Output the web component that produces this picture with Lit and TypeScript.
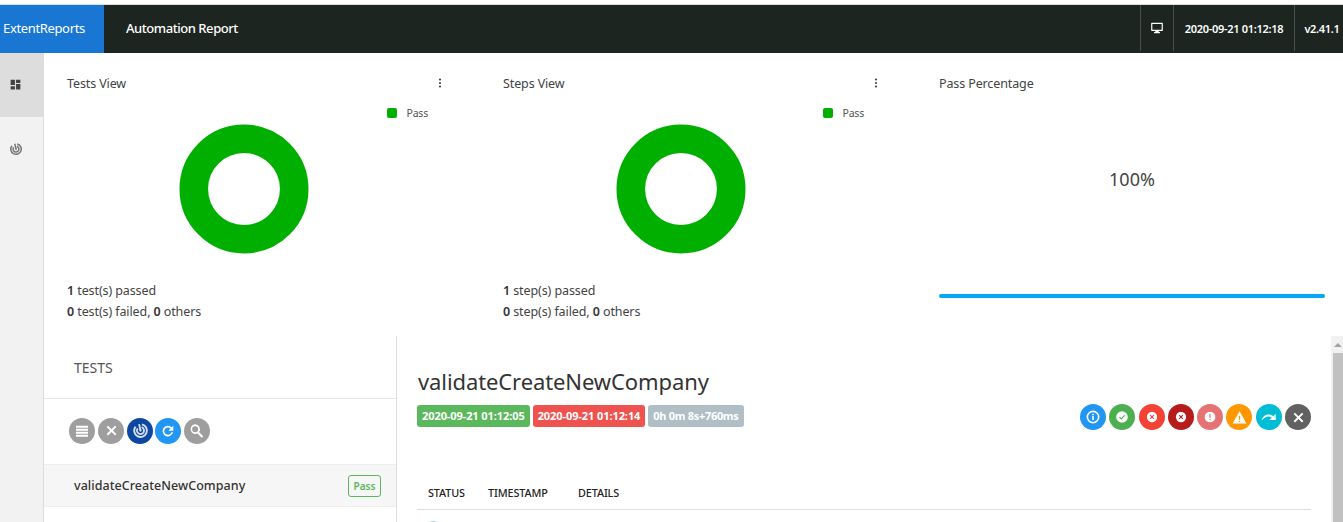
import { LitElement, html, css, svg } from 'lit';
import { customElement } from 'lit/decorators.js';

const I = {
  dash: svg`<path d="M3 3h8v10H3zM13 3h8v6h-8zM13 11h8v10h-8zM3 15h8v6H3z"/>`,
  dots: svg`<circle cx="12" cy="5" r="2.2"/><circle cx="12" cy="12" r="2.2"/><circle cx="12" cy="19" r="2.2"/>`,
  monitor: svg`<path d="M3 3h18a1 1 0 0 1 1 1v12a1 1 0 0 1-1 1h-6v2h2v2H7v-2h2v-2H3a1 1 0 0 1-1-1V4a1 1 0 0 1 1-1zm1 2v10h16V5z"/>`,
  close: svg`<path d="M6.400 4.200 12 9.800l5.600-5.600 2.200 2.200-5.600 5.600 5.600 5.600-2.200 2.200-5.600-5.600-5.600 5.600-2.200-2.200 5.600-5.600-5.600-5.600z"/>`,
  list: svg`<path d="M3 4h18v3H3zM3 8.500h18v3H3zM3 13h18v3H3zM3 17.500h18v3H3z"/>`,
  refresh: svg`<path d="M17.600 6.400A8 8 0 1 0 19.700 14h-2.600a5.500 5.500 0 1 1-1.300-5.800L12.500 11.500H20V4z"/>`,
  search: svg`<path d="M9.500 3a6.500 6.500 0 0 1 5.200 10.400l5.600 5.600-2 2-5.600-5.600A6.500 6.500 0 1 1 9.500 3zm0 2.500a4 4 0 1 0 0 8 4 4 0 0 0 0-8z"/>`,
  forward: svg`<path d="M2 17c1-5 4.500-8.500 9.500-8.500 2.600 0 4.700 1 6.300 2.500L21 7.500V16h-8.500l3.200-3.200c-1.200-1-2.600-1.500-4.200-1.500C8 11.300 4.500 13.500 2 17z"/>`,
};

function icon(p: unknown, size = 14, color = 'currentColor') {
  return html`<svg class="ic" viewBox="0 0 24 24" width=${size} height=${size} fill=${color}>${p}</svg>`;
}

// concentric rings used by the "tests" nav entry and the filter button
function target(size: number, color: string) {
  return html`<svg class="ic" viewBox="0 0 24 24" width=${size} height=${size} fill="none" stroke=${color} stroke-width="2.600">
    <path d="M14 3.300A9 9 0 1 1 5 6.500"/>
    <path d="M13.500 7.300A5 5 0 1 1 8 9"/>
    <circle cx="12" cy="12" r="1.600" fill=${color} stroke="none"/>
    <path d="M12 12 10 3"/>
  </svg>`;
}

function donut() {
  return html`<svg class="donut" viewBox="0 0 130 130" width="130" height="130">
    <circle cx="65" cy="65" r="50.200" fill="none" stroke="#00af00" stroke-width="28.600"/>
  </svg>`;
}

const statusIcons = [
  { bg: '#2196f3', size: 16, g: svg`<circle cx="12" cy="12" r="8.500" fill="none" stroke="#fff" stroke-width="2.400"/><path d="M10.800 10.500h2.400v6h-2.400zM10.800 7h2.400v2.200h-2.400z" fill="#fff"/>` },
  { bg: '#4caf50', size: 14, g: svg`<circle cx="12" cy="12" r="10" fill="#fff"/><path d="m7.500 12.200 3.200 3.200 5.800-6" fill="none" stroke="#4caf50" stroke-width="1.800"/>` },
  { bg: '#f44336', size: 14, g: svg`<circle cx="12" cy="12" r="8.800" fill="#fff"/><path d="m8.800 8.800 6.400 6.400m0-6.400-6.400 6.400" fill="none" stroke="#f44336" stroke-width="1.800"/>` },
  { bg: '#b71c1c', size: 14, g: svg`<circle cx="12" cy="12" r="8.800" fill="#fff"/><path d="m8.800 8.800 6.400 6.400m0-6.400-6.400 6.400" fill="none" stroke="#b71c1c" stroke-width="1.800"/>` },
  { bg: '#e57373', size: 14, g: svg`<circle cx="12" cy="12" r="9.200" fill="#fff"/><path d="M11 6.500h2v7h-2zM11 15.300h2v2.200h-2z" fill="#e57373"/>` },
  { bg: '#ff9800', size: 15, g: svg`<path d="M12 2 23 21.500H1z" fill="#fff"/><path d="M11 9h2v6.500h-2zM11 17h2v2.200h-2z" fill="#ff9800"/>` },
  { bg: '#00bcd4', size: 18, g: I.forward },
  { bg: '#616161', size: 15, g: I.close },
];

@customElement('app-root')
export class AppRoot extends LitElement {
  static styles = css`
    :host {
      display: block;
      width: 1343px;
      height: 522px;
      overflow: hidden;
      background: #fff;
      font-family: "Noto Sans", "Open Sans", sans-serif;
      color: #333;
    }
    .ic { display: block; flex: none; }

    .top-gap { height: 4px; background: #fff; border-bottom: 1px solid #ddd; }

    .navbar {
      display: flex;
      align-items: stretch;
      height: 48px;
      background: #1d2521;
      color: #fff;
    }
    .brand {
      width: 104px;
      background: #1976d2;
      padding-left: 3px;
      font-size: 13px;
      line-height: 46px;
      box-sizing: border-box;
      letter-spacing: -0.35px;
    }
    .title {
      flex: 1;
      padding-left: 22px;
      font-size: 13px;
      line-height: 46px;
      font-weight: 500;
      letter-spacing: -0.45px;
    }
    .nav-cell {
      display: flex;
      align-items: center;
      justify-content: center;
      height: 46px;
      font-size: 11px;
      font-weight: 600;
      letter-spacing: -0.3px;
      border-left: 1px solid #4a4f4c;
      box-sizing: border-box;
    }
    .nav-cell.monitor { width: 33px; }
    .nav-cell.date { width: 121px; }
    .nav-cell.version { width: 49px; padding-left: 6px; }

    .body { display: flex; height: 469px; }

    .sidenav {
      width: 44px;
      flex: none;
      background: #f2f2f2;
      border-right: 1px solid #ddd;
      box-sizing: border-box;
      color: #666;
    }
    .sidenav div {
      height: 64px;
      display: flex;
      align-items: center;
      justify-content: center;
      padding: 0 12px 1px 0;
      box-sizing: border-box;
    }
    .sidenav .active { background: #ddd; color: #444; }

    .main { flex: 1; min-width: 0; display: flex; flex-direction: column; }

    .dash {
      display: grid;
      grid-template-columns: repeat(3, 386px);
      column-gap: 50px;
      height: 283px;
      padding-left: 23px;
    }
    .card { display: flex; flex-direction: column; }
    .card:nth-child(2) .donut { margin-left: 113px; }
    .card-head {
      display: flex;
      justify-content: space-between;
      align-items: center;
      height: 20px;
      margin-top: 20px;
      font-size: 12.500px;
      letter-spacing: -0.12px;
      color: #444;
    }
    .card-head svg { color: #444; margin-right: 7px; }
    .legend {
      align-self: flex-end;
      display: flex;
      align-items: center;
      gap: 9px;
      height: 16px;
      margin-top: 12px;
      margin-right: 25px;
      font-size: 10.500px;
      letter-spacing: -0.2px;
      color: #555;
    }
    .legend i { width: 10px; height: 10px; border-radius: 2px; background: #00af00; }
    .donut { display: block; margin: 3px 0 0 112px; }
    .stats {
      margin-top: 26px;
      font-size: 12.500px;
      line-height: 21px;
      letter-spacing: -0.1px;
      color: #444;
    }
    .stats b { font-weight: 600; color: #333; }
    .pct {
      flex: 1;
      text-align: center;
      font-size: 18px;
      color: #444;
      padding-top: 74px;
    }
    .bar { height: 4px; border-radius: 2px; background: #03a9f4; margin-bottom: 38px; }

    .split { flex: 1; display: flex; min-height: 0; }

    .tests {
      width: 353px;
      flex: none;
      border-right: 1px solid #ddd;
      box-sizing: border-box;
    }
    .tests-head {
      height: 63px;
      border-bottom: 1px solid #e8e8e8;
      padding-left: 30px;
      font-size: 14px;
      line-height: 64px;
      color: #555;
      box-sizing: border-box;
    }
    .tools {
      display: flex;
      align-items: center;
      height: 65px;
      padding: 0 0 2px 25px;
      gap: 3px;
      box-sizing: border-box;
    }
    .btn {
      width: 26px;
      height: 26px;
      border-radius: 50%;
      flex: none;
      display: flex;
      align-items: center;
      justify-content: center;
      color: #fff;
    }
    .btn.grey { background: #9e9e9e; }
    .btn.indigo { background: #0d47a1; }
    .btn.blue { background: #2196f3; margin-left: -1px; }

    .test-row {
      display: flex;
      justify-content: space-between;
      align-items: center;
      height: 43px;
      background: #f6f6f6;
      border-top: 1px solid #eee;
      border-bottom: 1px solid #eee;
      padding: 0 15px 0 30px;
      box-sizing: border-box;
      font-size: 12.500px;
      font-weight: 500;
      letter-spacing: 0.05px;
      color: #333;
    }
    .pass-tag {
      width: 33px;
      height: 22px;
      border: 1px solid #5cb85c;
      border-radius: 3px;
      box-sizing: border-box;
      color: #5cb85c;
      font-size: 10px;
      text-align: center;
      line-height: 20px;
      font-weight: 600;
      letter-spacing: 0;
    }

    .detail { flex: 1; min-width: 0; padding: 0 20px 0 20px; overflow: hidden; }
    .detail h1 {
      margin: 29px 0 0 1px;
      height: 37px;
      font-size: 22px;
      line-height: 33px;
      font-weight: 400;
      letter-spacing: -0.1px;
      color: #333;
    }
    .meta { display: flex; align-items: flex-start; justify-content: space-between; margin-top: 3px; height: 25px; }
    .pills { display: flex; gap: 3px; }
    .pill {
      height: 22px;
      padding: 0 5px;
      border-radius: 3px;
      color: #fff;
      font-size: 11px;
      font-weight: 700;
      line-height: 21px;
      letter-spacing: -0.08px;
      white-space: nowrap;
    }
    .pill.ok { background: #5cb85c; }
    .pill.bad { background: #ef5350; }
    .pill.time { background: #b0bec5; letter-spacing: -0.3px; }
    .status-icons { display: flex; gap: 3.300px; margin-top: -1px; }
    .table-head {
      display: flex;
      height: 30px;
      margin-top: 50px;
      padding-left: 11px;
      border-bottom: 1px solid #ddd;
      font-size: 10.800px;
      font-weight: 500;
      line-height: 26px;
      letter-spacing: -0.1px;
      color: #222;
      box-sizing: border-box;
    }
    .table-head span:nth-child(1) { width: 60px; }
    .table-head span:nth-child(2) { width: 90px; }
    .row-icon {
      width: 12px;
      height: 12px;
      margin: 11px 0 0 10px;
      border-radius: 50%;
      background: #a8cfd6;
    }

    .scroll {
      width: 12px;
      flex: none;
      background: #f1f1f1;
      box-sizing: border-box;
      padding-left: 2px;
      display: flex;
      flex-direction: column;
    }
    .scroll .arrow {
      height: 17px;
      display: flex;
      align-items: center;
      justify-content: center;
    }
    .scroll .arrow i {
      border-left: 4px solid transparent;
      border-right: 4px solid transparent;
      border-bottom: 4px solid #a3a3a3;
    }
    .scroll .thumb { flex: 1; background: #c1c1c1; }
  `;

  private card(title: string, noun: string) {
    return html`<div class="card">
      <div class="card-head"><span>${title}</span>${icon(I.dots, 12)}</div>
      <div class="legend"><i></i><span>Pass</span></div>
      ${donut()}
      <div class="stats">
        <div><b>1</b> ${noun}(s) passed</div>
        <div><b>0</b> ${noun}(s) failed, <b>0</b> others</div>
      </div>
    </div>`;
  }

  render() {
    return html`
      <div class="top-gap"></div>
      <div class="navbar">
        <div class="brand">ExtentReports</div>
        <div class="title">Automation Report</div>
        <div class="nav-cell monitor">${icon(I.monitor, 14)}</div>
        <div class="nav-cell date">2020-09-21 01:12:18</div>
        <div class="nav-cell version">v2.41.1</div>
      </div>
      <div class="body">
        <div class="sidenav">
          <div class="active">${icon(I.dash, 13)}</div>
          <div>${target(14, '#777')}</div>
        </div>
        <div class="main">
          <div class="dash">
            ${this.card('Tests View', 'test')}
            ${this.card('Steps View', 'step')}
            <div class="card">
              <div class="card-head"><span>Pass Percentage</span></div>
              <div class="pct">100%</div>
              <div class="bar"></div>
            </div>
          </div>
          <div class="split">
            <div class="tests">
              <div class="tests-head">TESTS</div>
              <div class="tools">
                <div class="btn grey">${icon(I.list, 16)}</div>
                <div class="btn grey">${icon(I.close, 15)}</div>
                <div class="btn indigo">${target(17, '#d5dff0')}</div>
                <div class="btn blue">${icon(I.refresh, 16)}</div>
                <div class="btn grey">${icon(I.search, 18)}</div>
              </div>
              <div class="test-row">
                <span>validateCreateNewCompany</span>
                <span class="pass-tag">Pass</span>
              </div>
            </div>
            <div class="detail">
              <h1>validateCreateNewCompany</h1>
              <div class="meta">
                <div class="pills">
                  <span class="pill ok">2020-09-21 01:12:05</span>
                  <span class="pill bad">2020-09-21 01:12:14</span>
                  <span class="pill time">0h 0m 8s+760ms</span>
                </div>
                <div class="status-icons">
                  ${statusIcons.map(
                    (s) => html`<div class="btn" style="background:${s.bg}">
                      <svg class="ic" viewBox="0 0 24 24" width=${s.size} height=${s.size} fill="#fff">${s.g}</svg>
                    </div>`,
                  )}
                </div>
              </div>
              <div class="table-head">
                <span>STATUS</span><span>TIMESTAMP</span><span>DETAILS</span>
              </div>
              <div class="row-icon"></div>
            </div>
            <div class="scroll">
              <div class="arrow"><i></i></div>
              <div class="thumb"></div>
            </div>
          </div>
        </div>
      </div>
    `;
  }
}
